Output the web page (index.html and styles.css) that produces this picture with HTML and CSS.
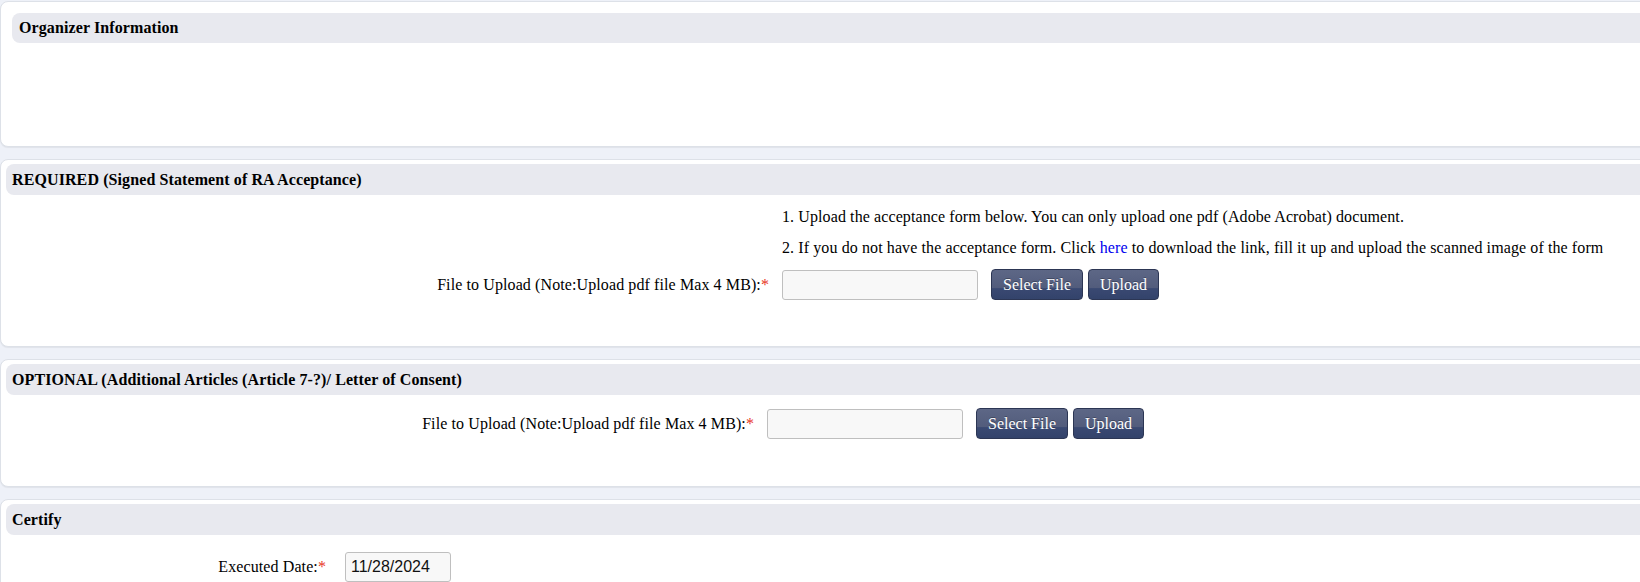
FILE: index.html
```html
<!DOCTYPE html>
<html>
<head>
<title>RA Acceptance</title>
<link rel="stylesheet" href="styles.css">
</head>
<body>

<div class="panel panel-first">
  <div class="panel-head head-inset">Organizer Information</div>
  <div class="panel-body empty"></div>
</div>

<div class="panel">
  <div class="panel-head">REQUIRED (Signed Statement of RA Acceptance)</div>
  <div class="panel-body body-required">
    <div class="row">
      <div class="cell-label"></div>
      <div class="note">1. Upload the acceptance form below. You can only upload one pdf (Adobe Acrobat) document.</div>
    </div>
    <div class="row">
      <div class="cell-label"></div>
      <div class="note">2. If you do not have the acceptance form. Click <a href="#">here</a> to download the link, fill it up and upload the scanned image of the form</div>
    </div>
    <div class="row row-field">
      <div class="cell-label">File to Upload (Note:Upload pdf file Max 4 MB):<span class="req">*</span></div>
      <div class="cell-value">
        <input type="text" class="file-box">
        <button class="btn btn-select">Select File</button>
        <button class="btn">Upload</button>
      </div>
    </div>
  </div>
</div>

<div class="panel">
  <div class="panel-head">OPTIONAL (Additional Articles (Article 7-?)/ Letter of Consent)</div>
  <div class="panel-body body-optional">
    <div class="row row-field">
      <div class="cell-label">File to Upload (Note:Upload pdf file Max 4 MB):<span class="req">*</span></div>
      <div class="cell-value">
        <input type="text" class="file-box">
        <button class="btn btn-select">Select File</button>
        <button class="btn">Upload</button>
      </div>
    </div>
  </div>
</div>

<div class="panel">
  <div class="panel-head">Certify</div>
  <div class="panel-body body-certify">
    <div class="row row-field">
      <div class="cell-label">Executed Date:<span class="req">*</span></div>
      <div class="cell-value">
        <input type="text" class="date-box" value="11/28/2024">
      </div>
    </div>
  </div>
</div>

</body>
</html>
```
FILE: styles.css
```css
html, body {
    margin: 0;
    overflow: hidden;
}
body {
    background: #eef1f8;
    font-family: "Liberation Serif", "Times New Roman", serif;
    font-size: 16px;
    letter-spacing: 0.1px;
    color: #000;
    padding-top: 1px;
}
a {
    color: #0000ee;
    text-decoration: none;
}

/* panels */
.panel {
    background: #fff;
    border: 1px solid #dde1e8;
    border-radius: 8px;
    margin-right: -20px;
    margin-bottom: 12px;
    box-shadow: 0 1px 1px rgba(0, 0, 0, 0.06);
    padding: 4px 0 0 5px;
}
.panel-first {
    padding: 11px 0 0 11px;
}
.panel-head {
    background: #e8e9ef;
    border-radius: 8px 0 0 8px;
    height: 31px;
    line-height: 31px;
    padding-left: 6px;
    font-weight: bold;
    font-size: 16px;
}
.head-inset {
    height: 30px;
    line-height: 30px;
    padding-left: 7px;
}
.panel-body.empty {
    height: 103px;
}
.body-required {
    padding-top: 6px;
    height: 151px;
    box-sizing: border-box;
}
.body-optional {
    padding-top: 13px;
    height: 91px;
    box-sizing: border-box;
}
.body-certify {
    padding-top: 17px;
    height: 60px;
    box-sizing: border-box;
}

/* label / value rows */
.row {
    display: flex;
    align-items: center;
}
.note {
    height: 31px;
    line-height: 31px;
    white-space: nowrap;
}
.row-field {
    margin-top: 6px;
}
.body-optional .row-field,
.body-certify .row-field {
    margin-top: 0;
}
.cell-label {
    box-sizing: border-box;
    text-align: right;
    padding-right: 13px;
    flex: none;
}
.body-required .cell-label { width: 776px; }
.body-optional .cell-label { width: 761px; }
.body-certify .cell-label { width: 339px; padding-right: 19px; }
.cell-value {
    display: flex;
    align-items: center;
    white-space: nowrap;
}
.req {
    color: #e8331c;
}

/* inputs */
.file-box, .date-box {
    box-sizing: border-box;
    height: 30px;
    border: 1px solid #bfbfbf;
    border-radius: 3px;
    background: #f8f8f8;
    margin: 0;
}
.file-box {
    width: 196px;
}
.date-box {
    width: 106px;
    font-family: "Liberation Sans", Arial, sans-serif;
    font-size: 16px;
    letter-spacing: 0;
    padding: 0 5px;
    color: #111;
}
.btn {
    box-sizing: border-box;
    height: 31px;
    padding: 0 11px;
    margin-left: 5px;
    border: 1px solid #2c3654;
    border-radius: 4px;
    background: linear-gradient(to bottom, #5d6786 0%, #525c7c 62%, #3a4972 64%, #33436b 100%);
    color: #fff;
    font-family: "Liberation Serif", "Times New Roman", serif;
    font-size: 16px;
    text-shadow: 0 -1px 0 rgba(0, 0, 0, 0.3);
}
.btn-select {
    margin-left: 13px;
}
```
